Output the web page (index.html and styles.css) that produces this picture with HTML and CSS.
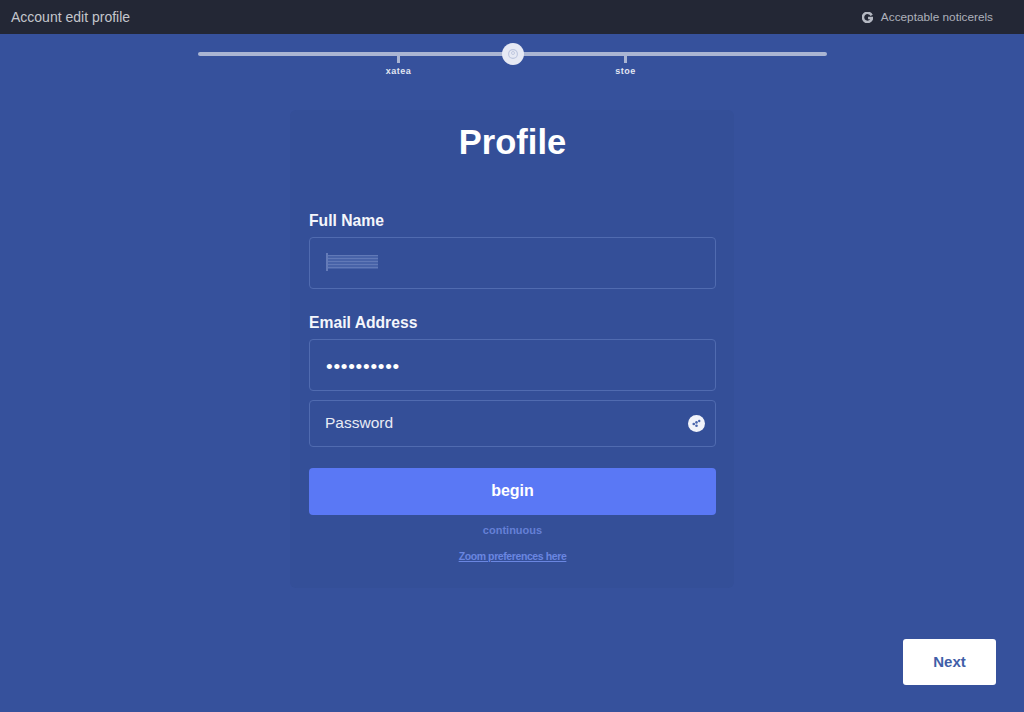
FILE: index.html
```html
<!DOCTYPE html>
<html lang="en">

<head>
    <meta charset="UTF-8">
    <meta name="viewport" content="width=device-width, initial-scale=1.0">
    <title>Account setup profile</title>
    <link rel="stylesheet" href="styles.css">
</head>

<body>
    <header class="topBar">
        <span class="topTitle">Account edit profile</span>
        <span class="topRight">
            <svg class="topIcon" width="11" height="11" viewBox="0 0 12 12">
                <path d="M10.5 3.6A5 5 0 1 0 11 6.6H6.6" fill="none" stroke="#b4b8c2" stroke-width="2.8"/>
            </svg>
            Acceptable noticerels
        </span>
    </header>

    <div class="stepper">
        <div class="track">
            <div class="tick tickLeft"><span>xatea</span></div>
            <div class="knob">
                <svg width="12" height="12" viewBox="0 0 12 12">
                    <circle cx="6" cy="6" r="4.4" fill="none" stroke="#bcc5de" stroke-width="1.1"/>
                    <circle cx="6" cy="5" r="1.5" fill="none" stroke="#bcc5de" stroke-width="0.9"/>
                </svg>
            </div>
            <div class="tick tickRight"><span>stoe</span></div>
        </div>
    </div>

    <main class="card">
        <h1>Profile</h1>

        <label class="fieldLabel">Full Name</label>
        <div class="input tall">
            <span class="caret"></span>
            <span class="blurText"></span>
        </div>

        <label class="fieldLabel second">Email Address</label>
        <div class="input tall">
            <span class="dots">••••••••••</span>
        </div>

        <div class="input short">
            <span class="placeholder">Password</span>
            <span class="eye">
                <svg width="11" height="11" viewBox="0 0 10 10">
                    <circle cx="2.5" cy="5.5" r="1.2" fill="#4a66ad"/>
                    <circle cx="5" cy="4" r="1.2" fill="#4a66ad"/>
                    <circle cx="5" cy="7" r="1.2" fill="#4a66ad"/>
                    <circle cx="7.5" cy="2.8" r="1.1" fill="#4a66ad"/>
                </svg>
            </span>
        </div>

        <button class="submit">begin</button>
        <p class="muted">continuous</p>
        <a class="link" href="#">Zoom preferences here</a>
    </main>

    <button class="next">Next</button>
</body>

</html>
```

FILE: styles.css
```css
* {
    box-sizing: border-box;
}

body {
    margin: 0;
    height: 712px;
    overflow: hidden;
    position: relative;
    font-family: "Liberation Sans", Arial, sans-serif;
    background-color: #36519c;
    color: #fff;
}

.topBar {
    height: 34px;
    padding: 0 31px 0 11px;
    display: flex;
    justify-content: space-between;
    align-items: center;
    background-color: #232735;
}

.topTitle {
    font-size: 14px;
    color: #c4c6cc;
}

.topRight {
    display: flex;
    align-items: center;
    gap: 8px;
    font-size: 11.8px;
    color: #aeb1bb;
}

.stepper {
    padding: 18px 197px 0 198px;
    height: 76px;
}

.track {
    position: relative;
    height: 4px;
    border-radius: 2px;
    background-color: #aab5d3;
}

.knob {
    position: absolute;
    left: 304px;
    top: -9px;
    width: 22px;
    height: 22px;
    border-radius: 50%;
    background-color: #e6e9f4;
    display: flex;
    align-items: center;
    justify-content: center;
}

.tick {
    position: absolute;
    top: 3px;
    width: 3px;
    height: 8px;
    background-color: #aab5d3;
}

.tick span {
    position: absolute;
    top: 11px;
    left: 50%;
    transform: translateX(-50%);
    font-size: 9px;
    font-weight: bold;
    color: #e2e6f2;
    letter-spacing: 0.5px;
}

.tickLeft {
    left: 199px;
}

.tickRight {
    left: 426px;
}

.card {
    width: 444px;
    height: 478px;
    margin: 0 auto;
    padding: 10px 18px 0 19px;
    background-color: #344f98;
    border-radius: 6px;
    display: flex;
    flex-direction: column;
}

h1 {
    margin: 0;
    height: 44px;
    font-size: 34.5px;
    line-height: 44px;
    font-weight: bold;
    text-align: center;
}

.fieldLabel {
    margin-top: 47px;
    height: 20px;
    font-size: 15.7px;
    line-height: 20px;
    font-weight: bold;
    color: #f4f6fb;
}

.second {
    margin-top: 24px;
}

.input {
    margin-top: 6px;
    flex: none;
    display: flex;
    align-items: center;
    padding: 0 10px 0 16px;
    border: 1px solid #506bb0;
    border-radius: 4px;
}

.tall {
    height: 52px;
}

.short {
    height: 47px;
    margin-top: 9px;
    justify-content: space-between;
}

.caret {
    width: 2px;
    height: 18px;
    margin-bottom: 2px;
    background-color: #647bb8;
}

.blurText {
    width: 50px;
    height: 14px;
    margin-bottom: 2px;
    background: repeating-linear-gradient(#6d84bf 0 1px, #4d68ad 1px 3px);
    filter: blur(0.6px);
    opacity: 0.8;
}

.dots {
    padding-top: 4px;
    font-size: 19px;
    line-height: 20px;
    letter-spacing: 0.75px;
    color: #fff;
}

.placeholder {
    margin: 0 0 2px -1px;
    font-size: 15.5px;
    color: #e8ebf5;
}

.eye {
    width: 17px;
    height: 17px;
    border-radius: 50%;
    background-color: #f1f3fa;
    display: flex;
    align-items: center;
    justify-content: center;
}

.submit {
    margin-top: 21px;
    height: 47px;
    padding-bottom: 3px;
    flex: none;
    border: none;
    border-radius: 4px;
    background-color: #5a78f5;
    color: #fff;
    font-family: inherit;
    font-size: 16px;
    font-weight: bold;
}

.muted {
    margin: 8px 0 0;
    height: 14px;
    line-height: 14px;
    text-align: center;
    font-size: 11px;
    font-weight: bold;
    color: #6580d6;
}

.link {
    margin-top: 12px;
    line-height: 14px;
    text-align: center;
    font-size: 10.5px;
    font-weight: bold;
    letter-spacing: -0.4px;
    color: #6a86e0;
}

/* floats in the corner over the page */
.next {
    position: absolute;
    right: 28px;
    bottom: 27px;
    width: 93px;
    height: 46px;
    padding-bottom: 3px;
    border: none;
    border-radius: 3px;
    background-color: #fff;
    color: #3f5ea8;
    font-family: inherit;
    font-size: 15px;
    font-weight: bold;
}
```
